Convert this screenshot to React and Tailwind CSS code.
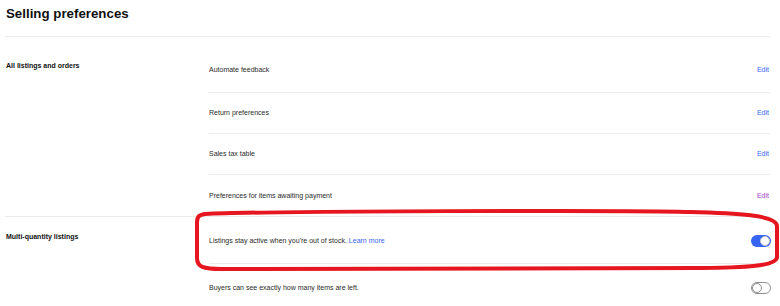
import React from 'react'

const rows = [
  { label: 'Automate feedback', visited: false },
  { label: 'Return preferences', visited: false },
  { label: 'Sales tax table', visited: false },
  { label: 'Preferences for items awaiting payment', visited: true },
]

function Toggle({ on }) {
  if (on) {
    return (
      <span className="flex items-center justify-end w-[20px] h-[12px] rounded-full bg-[#3665f3] pr-[1px]">
        <span className="w-[10px] h-[10px] rounded-full bg-white border border-[#c7c7c7]" />
      </span>
    )
  }
  return (
    <span className="flex items-center w-[20px] h-[12px] rounded-full bg-white border border-[#8f8f8f]">
      <span className="w-[10px] h-[10px] rounded-full bg-white border border-[#8f8f8f]" />
    </span>
  )
}

export default function App() {
  return (
    <div className="relative w-[780px] h-[306px] overflow-hidden bg-white font-['Liberation_Sans',Arial,sans-serif] text-[#2a2a2a]">
      <div className="pl-[5px] w-[770px]">
        <h1 className="pt-[6px] pl-px text-[13.3px] leading-[16px] font-bold text-[#111] h-[36px]">
          Selling preferences
        </h1>

        {/* All listings and orders */}
        <div className="flex border-t border-b border-[#ececec] pt-[13px]">
          <div className="w-[204px] shrink-0 pl-px pt-[11px] text-[7px] leading-[10px] font-bold text-[#111]">
            All listings and orders
          </div>
          <div className="flex-1">
            {rows.map((r, i) => (
              <div key={r.label}
                className={`flex items-center justify-between text-[7px] leading-[10px] ${i === 0 ? 'h-[43px] pb-[3px]' : 'h-[41px]'} ${i < rows.length - 1 ? 'border-b border-[#ececec]' : ''}`}>
                <span>{r.label}</span>
                <span className={`pr-px ${r.visited ? 'text-[#a33dc4]' : 'text-[#3665f3]'}`}>Edit</span>
              </div>
            ))}
          </div>
        </div>

        {/* Multi-quantity listings */}
        <div className="flex">
          <div className="w-[204px] shrink-0 pl-px pt-[15px] text-[7px] leading-[10px] font-bold text-[#111]">
            Multi-quantity listings
          </div>
          <div className="flex-1">
            <div className="flex items-center justify-between h-[47px] pt-[1px] border-b border-[#ececec] text-[7px] leading-[10px]">
              <span>
                Listings stay active when you're out of stock. <span className="text-[#3665f3]">Learn more</span>
              </span>
              <span className="-mr-px"><Toggle on /></span>
            </div>
            <div className="flex items-center justify-between h-[48px] text-[7px] leading-[10px]">
              <span>Buyers can see exactly how many items are left.</span>
              <span className="-mr-px"><Toggle /></span>
            </div>
          </div>
        </div>
      </div>

      {/* hand-drawn highlight */}
      <svg className="absolute inset-0 pointer-events-none" width="780" height="306" viewBox="0 0 780 306">
        <path
          d="M205 214 C260 211 640 210 690 212 C735 213 777 215 777 226 L777 257 C777 266 745 268 700 268 L222 269 C203 269 197 267 197 258 L197 223 C197 216 199 215 205 214 Z"
          fill="none" stroke="#e5161f" strokeWidth="4" strokeLinejoin="round" />
      </svg>
    </div>
  )
}
